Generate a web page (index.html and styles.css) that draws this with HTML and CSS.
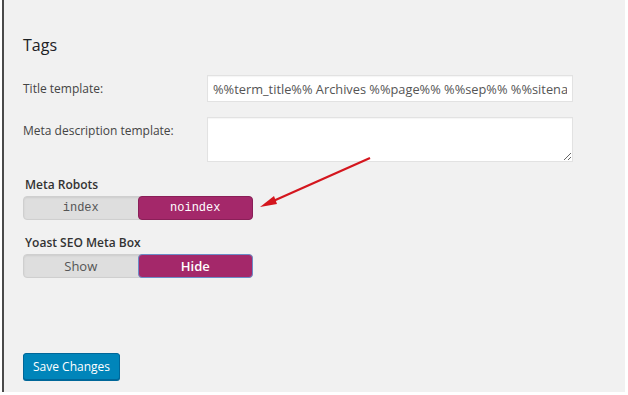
FILE: index.html
```html
<!DOCTYPE html>
<html lang="en">
  <head>
    <meta charset="UTF-8" />
    <title>Titles &amp; Metas - Tags</title>
    <link rel="stylesheet" href="styles.css">
  </head>
  <body>
    <div class="wrap">
      <h2>Tags</h2>
      <div class="row">
        <label class="row-label" for="title-tpl">Title template:</label>
        <input id="title-tpl" class="text-input" type="text" value="%%term_title%% Archives %%page%% %%sep%% %%sitename%%" />
      </div>
      <div class="row">
        <label class="row-label" for="desc-tpl">Meta description template:</label>
        <textarea id="desc-tpl" class="text-area"></textarea>
      </div>

      <div class="switch-group robots">
        <div class="switch-label">Meta Robots</div>
        <div class="switch mono">
          <span class="opt">index</span>
          <span class="opt active">noindex</span>
        </div>
        <!-- annotation arrow -->
        <svg class="arrow" width="120" height="60" viewBox="0 0 120 60">
          <line x1="113" y1="2" x2="14" y2="46" stroke="#d4161e" stroke-width="2.2" />
          <path d="M3 51 L17 40 L20 48 Z" fill="#d4161e" />
        </svg>
      </div>

      <div class="switch-group">
        <div class="switch-label">Yoast SEO Meta Box</div>
        <div class="switch">
          <span class="opt">Show</span>
          <span class="opt active focus">Hide</span>
        </div>
      </div>

      <button class="button-primary">Save Changes</button>
    </div>
  </body>
</html>
```

FILE: styles.css
```css
* {
  box-sizing: border-box;
}
html,
body {
  margin: 0;
  padding: 0;
  background: #ffffff;
}
body {
  font-family: "Open Sans", "Liberation Sans", sans-serif;
  color: #444;
  font-size: 12px;
}
.wrap {
  position: relative;
  width: 623px;
  height: 392px;
  margin-left: 2px;
  border-left: 2px solid #4a4a4a;
  background: #f1f1f1;
  padding: 34px 0 0 19px;
}
h2 {
  margin: 0 0 18px;
  font-size: 16px;
  line-height: 23px;
  font-weight: 400;
  color: #1d2125;
}
.row {
  display: flex;
  align-items: flex-start;
  margin-bottom: 15px;
}
.row-label {
  width: 184px;
  line-height: 27px;
  color: #444;
}
.text-input,
.text-area {
  width: 366px;
  border: 1px solid #e2e2e2;
  background: #fff;
  font-family: inherit;
  font-size: 12.8px;
  color: #555;
  margin: 0;
  box-shadow: inset 0 1px 1px rgba(0, 0, 0, 0.04);
}
.text-input {
  height: 27px;
  padding: 0 5px;
}
.text-area {
  height: 45px;
  resize: vertical;
}
.row + .row {
  margin-bottom: 14px;
}
.switch-group {
  position: relative;
  margin-bottom: 14px;
}
.switch-label {
  font-weight: 600;
  line-height: 18px;
  margin: 0 0 2px 2px;
  color: #333;
}
.switch {
  display: flex;
  width: 230px;
  height: 24px;
  border-radius: 4px;
  background: #dedede;
  border: 1px solid #cfcfcf;
  box-shadow: inset 0 1px 2px rgba(0, 0, 0, 0.08);
}
.opt {
  flex: 1;
  display: flex;
  align-items: center;
  justify-content: center;
  color: #555;
  font-size: 13px;
}
.opt.active {
  margin: -1px -1px -1px 0;
  background: #a4286a;
  color: #fff;
  font-weight: 600;
  border-radius: 4px;
  border: 1px solid #8a1f58;
}
.opt.focus {
  border-color: #6b8cc7;
}
.mono .opt {
  font-family: "Liberation Mono", "DejaVu Sans Mono", monospace;
  font-size: 12px;
  font-weight: 400;
}
.arrow {
  position: absolute;
  left: 234px;
  top: -20px;
}
.button-primary {
  margin-top: 61px;
  height: 27px;
  padding: 0 9px;
  background: #0085ba;
  border: 1px solid #006799;
  border-radius: 3px;
  color: #fff;
  font-family: inherit;
  font-size: 12px;
  box-shadow: 0 1px 0 #006799;
  cursor: pointer;
}
```
